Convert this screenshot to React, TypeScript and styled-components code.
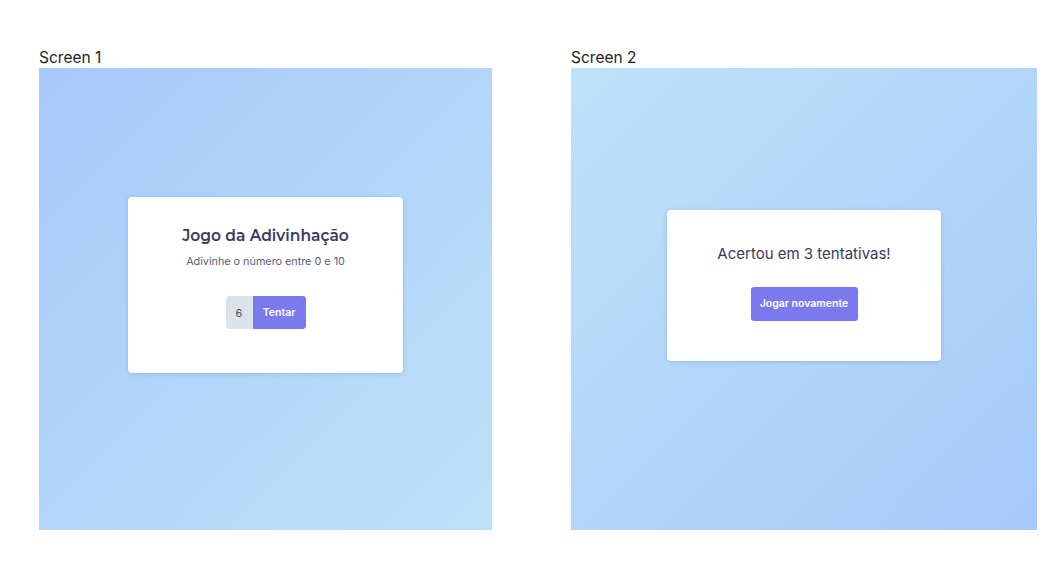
import styled, { createGlobalStyle } from "styled-components";

const GlobalStyle = createGlobalStyle`
	html, body {
		margin: 0;
		padding: 0;
		background: #fff;
	}
	body {
		font-family: Inter, "Liberation Sans", sans-serif;
	}
`;

const Page = styled.div`
	display: flex;
	gap: 79px;
	padding: 46px 0 0 39px;
`;

const Column = styled.div`
	display: flex;
	flex-direction: column;
`;

const Label = styled.div`
	font-family: Inter, "Liberation Sans", sans-serif;
	font-size: 15.5px;
	color: #1e1e1e;
	line-height: 22px;
	height: 22px;
	padding-top: 1px;
	box-sizing: border-box;
`;

const Frame = styled.div<{ $w: number; $reverse?: boolean }>`
	width: ${(p) => p.$w}px;
	height: 462px;
	background: linear-gradient(
		${(p) => (p.$reverse ? "315deg" : "135deg")},
		#a6c9fa 0%,
		#bee2f9 100%
	);
	display: flex;
	align-items: center;
	justify-content: center;
	padding-bottom: 28px;
	box-sizing: border-box;
`;

const Card = styled.div<{ $w: number; $h: number }>`
	width: ${(p) => p.$w}px;
	height: ${(p) => p.$h}px;
	box-sizing: border-box;
	background: #fff;
	border-radius: 4px;
	box-shadow: 0 1px 4px rgba(60, 100, 170, 0.25);
	display: flex;
	flex-direction: column;
	align-items: center;
`;

const Title = styled.h1`
	margin: 28px 0 0;
	font-family: Montserrat, Lato, "Open Sans", sans-serif;
	font-weight: 600;
	font-size: 15.5px;
	line-height: 22px;
	color: #3a3a5e;
`;

const Subtitle = styled.p`
	margin: 8px 0 0;
	font-family: Inter, "Open Sans", sans-serif;
	font-size: 10.8px;
	line-height: 14px;
	color: #5b5b7c;
`;

const InputGroup = styled.div`
	display: flex;
	margin-top: 27px;
	height: 33px;
	border-radius: 3px;
	overflow: hidden;
`;

const NumberBox = styled.div`
	width: 27px;
	background: #dde3ea;
	display: flex;
	align-items: center;
	justify-content: center;
	font-family: Inter, sans-serif;
	font-size: 11px;
	color: #4b4b5e;
`;

const Button = styled.button<{ $w: number; $h: number }>`
	width: ${(p) => p.$w}px;
	height: ${(p) => p.$h}px;
	border: none;
	padding: 0;
	background: #7a7aee;
	color: #fff;
	font-family: Inter, sans-serif;
	font-weight: 600;
	font-size: 10.5px;
	border-radius: 3px;
`;

const GroupButton = styled(Button)`
	border-radius: 0 3px 3px 0;
`;

const Message = styled.p`
	margin: 33px 0 0;
	font-family: Inter, sans-serif;
	font-size: 15px;
	line-height: 22px;
	color: #3a3a5e;
`;

const ReplayButton = styled(Button)`
	margin-top: 22px;
`;

export default function App() {
	return (
		<>
			<GlobalStyle />
			<Page>
				<Column>
					<Label>Screen 1</Label>
					<Frame $w={453}>
						<Card $w={275} $h={176}>
							<Title>Jogo da Adivinhação</Title>
							<Subtitle>Adivinhe o número entre 0 e 10</Subtitle>
							<InputGroup>
								<NumberBox>6</NumberBox>
								<GroupButton $w={53} $h={33}>
									Tentar
								</GroupButton>
							</InputGroup>
						</Card>
					</Frame>
				</Column>
				<Column>
					<Label>Screen 2</Label>
					<Frame $w={466} $reverse>
						<Card $w={274} $h={151}>
							<Message>Acertou em 3 tentativas!</Message>
							<ReplayButton $w={107} $h={34}>
								Jogar novamente
							</ReplayButton>
						</Card>
					</Frame>
				</Column>
			</Page>
		</>
	);
}
